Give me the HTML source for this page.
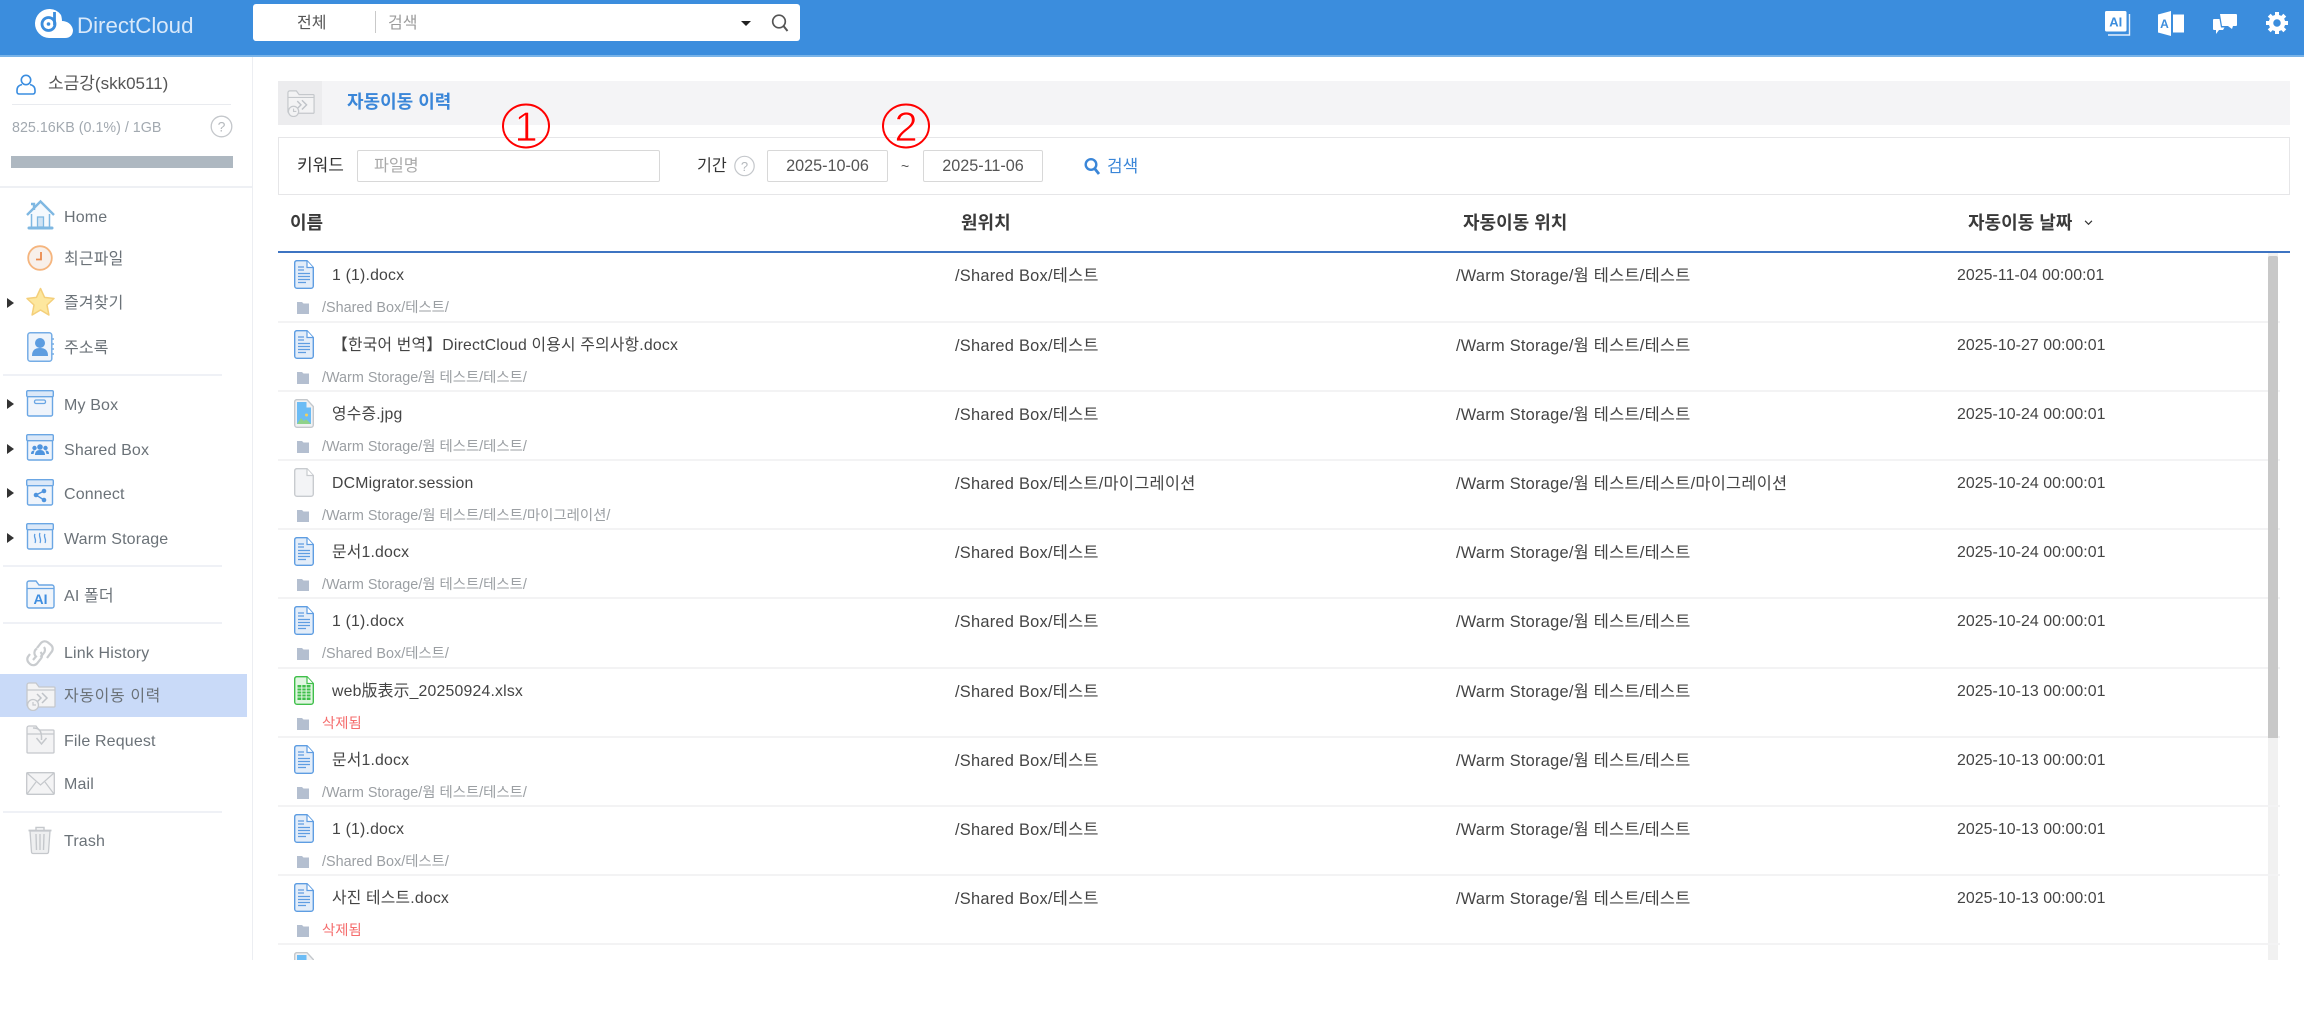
<!DOCTYPE html>
<html lang="ko">
<head>
<meta charset="utf-8">
<title>DirectCloud</title>
<style>
*{box-sizing:border-box}
html,body{margin:0;padding:0;background:#fff;width:2304px;height:1019px;overflow:hidden}
body{font-family:"Liberation Sans","Noto Sans CJK KR",sans-serif;position:relative;color:#444}
.a{position:absolute;white-space:nowrap}
.t{position:absolute;white-space:nowrap;line-height:24px;height:24px}
svg{position:absolute;display:block;overflow:visible}
.nav{font-size:16px;color:#6b7278;left:64px;letter-spacing:.15px;margin-top:1.5px}
.div{position:absolute;left:3px;width:219px;height:2px;background:#eff1f6}
.tri{position:absolute;left:7px;width:0;height:0;border-left:7px solid #333;border-top:5px solid transparent;border-bottom:5px solid transparent}
.th{font-size:18px;font-weight:bold;color:#3a3a3a;top:210px}
.input{position:absolute;top:150px;height:32px;background:#fff;border:1px solid #d8d8d8;border-radius:2px;font-size:16.2px;color:#555;text-align:center;line-height:30px}
.row{position:absolute;left:278px;width:2002px;height:69.2px;border-bottom:2px solid #f3f3f4}
.row .n{position:absolute;left:54px;top:11px;font-size:15.8px;letter-spacing:.2px;line-height:24px;color:#444;white-space:nowrap}
.row .s,.row .d{position:absolute;left:44px;top:45px;font-size:14.4px;line-height:20px;color:#9b9fa3;white-space:nowrap}
.row .d{color:#f56e6e}
.row .c2,.row .c3,.row .c4{position:absolute;top:11px;font-size:16.4px;letter-spacing:.25px;line-height:24px;color:#444;white-space:nowrap}
.row .c2{left:677px}
.row .c3{left:1178px}
.row .c4{left:1679px;font-size:15.9px;letter-spacing:.05px}
.row svg.ic{left:16px;top:7px}
.row svg.fo{left:19px;top:49px}
</style>
</head>
<body>
<svg width="0" height="0" style="position:absolute">
<defs>
<symbol id="doc" viewBox="0 0 20 29">
<path d="M2.500.7H13L19.300 7.500V26a2.300 2.300 0 0 1-2.300 2.300H3A2.300 2.300 0 0 1 .7 26V3A2.300 2.300 0 0 1 2.500.7Z" fill="#e3edf9" stroke="#5e9de2" stroke-width="1.400"/>
<path d="M13 1V7.500H19" fill="#fff" stroke="#5e9de2" stroke-width="1.200"/>
<path d="M4 7h6M4 10h6M4 13.500h12M4 16.500h12M4 19.500h12M4 22.500h8" stroke="#5e9de2" stroke-width="1.300"/>
</symbol>
<symbol id="xls" viewBox="0 0 20 29">
<path d="M2.500.7H13L19.300 7.500V26a2.300 2.300 0 0 1-2.300 2.300H3A2.300 2.300 0 0 1 .7 26V3A2.300 2.300 0 0 1 2.500.7Z" fill="#e2f6e2" stroke="#3fbf4a" stroke-width="1.400"/>
<path d="M13 1V7.500H19" fill="#fff" stroke="#3fbf4a" stroke-width="1.200"/>
<path d="M3.500 9h13v15h-13Z" fill="#3fbf4a"/>
<path d="M3.500 12h13M3.500 15h13M3.500 18h13M3.500 21h13M7.800 9v15M12.200 9v15" stroke="#e2f6e2" stroke-width="1"/>
</symbol>
<symbol id="img" viewBox="0 0 20 29">
<path d="M2.500.7H13L19.300 7.500V26a2.300 2.300 0 0 1-2.300 2.300H3A2.300 2.300 0 0 1 .7 26V3A2.300 2.300 0 0 1 2.500.7Z" fill="#f0f1f3" stroke="#c4c8cc" stroke-width="1.400"/>
<path d="M3 3h9.500v5.500H17V25H3Z" fill="#6cbcf5"/>
<path d="M3 25l4-6 3 3 2-2 5 5Z" fill="#8fd28a"/>
<circle cx="12.500" cy="16" r="1.500" fill="#f5cf5c"/>
</symbol>
<symbol id="blank" viewBox="0 0 20 29">
<path d="M2.500.7H13L19.300 7.500V26a2.300 2.300 0 0 1-2.300 2.300H3A2.300 2.300 0 0 1 .7 26V3A2.300 2.300 0 0 1 2.500.7Z" fill="#f3f4f6" stroke="#c8cbcf" stroke-width="1.400"/>
<path d="M13 1V7.500H19" fill="#fff" stroke="#c8cbcf" stroke-width="1.200"/>
</symbol>
<symbol id="fold" viewBox="0 0 12 12">
<path d="M0 0H5L6.500 1.500H12V12H0Z" fill="#b4bfd0"/>
</symbol>
<symbol id="box" viewBox="0 0 28 27">
<path d="M1.500 6H26.500V24.500a1.500 1.500 0 0 1-1.500 1.500H3a1.500 1.500 0 0 1-1.500-1.500Z" fill="#eff4fb" stroke="#6aa6e4" stroke-width="1.400"/>
<rect x=".7" y=".7" width="26.600" height="6" rx="1.200" fill="#dbe8f8" stroke="#6aa6e4" stroke-width="1.400"/>
</symbol>
<symbol id="movefold" viewBox="0 0 30 30">
<path d="M1 4a2 2 0 0 1 2-2H10L13 6H28a1 1 0 0 1 1 1V25a1 1 0 0 1-1 1H3a2 2 0 0 1-2-2Z" fill="#f3f3f4" stroke="#c5c8cc" stroke-width="1.300"/>
<path d="M1 9H29" stroke="#c5c8cc" stroke-width="1.200"/>
<path d="M11 13l4 4-4 4M16 12l5 5-5 5" fill="none" stroke="#bfc3c8" stroke-width="1.500"/>
<circle cx="7" cy="24" r="5.500" fill="#f3f3f4" stroke="#c5c8cc" stroke-width="1.300"/>
<path d="M7 21v3h3" fill="none" stroke="#c5c8cc" stroke-width="1.200"/>
</symbol>
</defs>
</svg>

<!-- HEADER -->
<div class="a" style="left:0;top:0;width:2304px;height:55px;background:#3b8ddd"></div>
<div class="a" style="left:0;top:55px;width:2304px;height:2px;background:#78b3e8"></div>
<svg style="left:35px;top:9px" width="38" height="29" viewBox="0 0 38 29">
<path d="M15 0a14 14 0 0 1 11 6c1 3 1 6 1 6 5 0 10 3 11 9 0 5-3 8-8 8H14A14 14 0 0 1 15 0Z" fill="#fff"/>
<circle cx="13.500" cy="15" r="6.500" fill="none" stroke="#3b8ddd" stroke-width="2.800"/>
<circle cx="13.500" cy="15" r="1.800" fill="#3b8ddd"/>
<path d="M19.500 3V16" stroke="#3b8ddd" stroke-width="2.800"/>
</svg>
<div class="t" style="left:77px;top:14px;font-size:22.300px;color:#d9e9fa">DirectCloud</div>
<div class="a" style="left:253px;top:4px;width:547px;height:37px;background:#fff;border-radius:3px"></div>
<div class="t" style="left:297px;top:12px;font-size:16px;color:#555">전체</div>
<div class="a" style="left:375px;top:11px;width:1px;height:22px;background:#c9c9c9"></div>
<div class="t" style="left:388px;top:12px;font-size:16px;color:#9b9b9b">검색</div>
<div class="a" style="left:741px;top:21px;width:0;height:0;border-top:5px solid #222;border-left:5px solid transparent;border-right:5px solid transparent"></div>
<svg style="left:771px;top:13px" width="18" height="20" viewBox="0 0 18 20"><circle cx="8" cy="8.500" r="6.300" fill="none" stroke="#555" stroke-width="1.700"/><path d="M12.500 13l4 5" stroke="#555" stroke-width="2"/></svg>

<svg style="left:2105px;top:11px" width="26" height="25" viewBox="0 0 26 25"><rect x="0" y="0" width="21.500" height="20.500" rx="1.500" fill="#fff"/><path d="M24.500 3V24H3" fill="none" stroke="#e6f0fb" stroke-width="1.400"/><text x="10.700" y="15.500" text-anchor="middle" font-family="Liberation Sans" font-weight="bold" font-size="13" fill="#3b8ddd">AI</text></svg>
<svg style="left:2158px;top:11px" width="26" height="25" viewBox="0 0 26 25"><path d="M0 3.500L13 0V25L0 21.500Z" fill="#fff"/><rect x="15" y="3.500" width="11" height="18" fill="#fff"/><text x="6.500" y="17" text-anchor="middle" font-family="Liberation Sans" font-weight="bold" font-size="12" fill="#3b8ddd">A</text></svg>
<svg style="left:2213px;top:14px" width="24" height="20" viewBox="0 0 24 20"><path d="M7 0H23a1 1 0 0 1 1 1V11a1 1 0 0 1-1 1H20L19 15L15 12H9Z" fill="#fff"/><path d="M1 5H6.500L8 13.500H11.500L10 16H6L3 20V16H1a1 1 0 0 1-1-1V6a1 1 0 0 1 1-1Z" fill="#fff"/></svg>
<svg style="left:2266px;top:12px" width="22" height="22" viewBox="0 0 22 22"><circle cx="11" cy="11" r="6" fill="none" stroke="#fff" stroke-width="4.500"/><path d="M11 0v4M11 18v4M0 11h4M18 11h4M3.200 3.200l2.800 2.800M16 16l2.800 2.800M3.200 18.800L6 16M16 6l2.800-2.800" stroke="#fff" stroke-width="4"/></svg>

<!-- SIDEBAR -->
<div class="a" style="left:252px;top:57px;width:1px;height:903px;background:#eceef2"></div>
<svg style="left:16px;top:74px" width="20" height="21" viewBox="0 0 20 21"><circle cx="10" cy="6" r="4.700" fill="none" stroke="#3a8de0" stroke-width="1.600"/><path d="M6 10.500C2.500 11.500 1 13 1 16.500V18a2 2 0 0 0 2 2H17a2 2 0 0 0 2-2V16.500C19 13 17.500 11.500 14 10.500" fill="none" stroke="#3a8de0" stroke-width="1.600"/></svg>
<div class="t" style="left:48px;top:72px;font-size:17px;color:#555">소금강(skk0511)</div>
<div class="a" style="left:12px;top:104px;width:219px;height:1px;background:#e9ebef"></div>
<div class="t" style="left:12px;top:116px;font-size:14.300px;color:#a2a9b0">825.16KB (0.1%) / 1GB</div>
<svg style="left:210px;top:115px" width="23" height="23" viewBox="0 0 23 23"><circle cx="11.500" cy="11.500" r="10.300" fill="#fff" stroke="#c4c7cb" stroke-width="1.300"/><text x="11.500" y="16.500" text-anchor="middle" font-family="Liberation Sans" font-size="14" fill="#b5b9bd">?</text></svg>
<div class="a" style="left:11px;top:156px;width:222px;height:12px;background:#aeb8c1"></div>
<div class="a" style="left:0;top:186px;width:252px;height:2px;background:#eef0f4"></div>

<svg style="left:26px;top:200px" width="29" height="30" viewBox="0 0 29 30"><path d="M5 28V13L14.500 3.500 24 13V28Z" fill="#f5f9fd"/><path d="M1 15L14.500 1.500 28 15" fill="none" stroke="#7fb8e2" stroke-width="2.400"/><path d="M5 4h3v6" fill="none" stroke="#7fb8e2" stroke-width="2.400"/><path d="M5.500 14V27M23.500 14V27" stroke="#7fb8e2" stroke-width="1.500"/><rect x="11.500" y="17" width="6" height="10" fill="#cfe3f4" stroke="#7fb8e2" stroke-width="1.300"/><rect x="1.500" y="26.500" width="26" height="3" rx="1.500" fill="#7fb8e2"/></svg>
<div class="t nav" style="top:204px">Home</div>
<svg style="left:27px;top:245px" width="26" height="26" viewBox="0 0 26 26"><circle cx="13" cy="13" r="11.800" fill="#f8f0ea" stroke="#f5b57e" stroke-width="1.800"/><path d="M14 7V14.500H9" fill="none" stroke="#ea8a4d" stroke-width="1.800"/></svg>
<div class="t nav" style="top:246px">최근파일</div>
<div class="tri" style="top:298px"></div>
<svg style="left:26px;top:287px" width="29" height="30" viewBox="0 0 29 30"><path d="M14.500 1.500L18.600 10.400 28 11.500 21 18 22.900 28 14.500 23 6.100 28 8 18 1 11.500 10.400 10.400Z" fill="#fde79e" stroke="#f4cf7a" stroke-width="1.500" stroke-linejoin="round"/></svg>
<div class="t nav" style="top:290px">즐겨찾기</div>
<svg style="left:27px;top:332px" width="27" height="30" viewBox="0 0 27 30"><rect x=".8" y=".8" width="24" height="28.400" rx="2.500" fill="#eef4fb" stroke="#75ade6" stroke-width="1.500"/><circle cx="13" cy="11" r="5" fill="#5d9de0"/><path d="M5 24c0-6 3-8 8-8s8 2 8 8Z" fill="#5d9de0"/><path d="M25 7h2M25 12h2M25 17h2M25 22h2" stroke="#75ade6" stroke-width="1.500"/></svg>
<div class="t nav" style="top:335px">주소록</div>
<div class="div" style="top:374px"></div>

<div class="tri" style="top:399px"></div>
<svg style="left:26px;top:390px" width="28" height="27"><use href="#box"/><rect x="8.500" y="10" width="11" height="3.500" rx="1.500" fill="none" stroke="#6aa6e4" stroke-width="1.300"/></svg>
<div class="t nav" style="top:392px">My Box</div>
<div class="tri" style="top:444px"></div>
<svg style="left:26px;top:434px" width="28" height="27"><use href="#box"/><circle cx="14" cy="13" r="2.800" fill="#4f94de"/><circle cx="8.500" cy="14" r="2.200" fill="#4f94de"/><circle cx="19.500" cy="14" r="2.200" fill="#4f94de"/><path d="M9 21c0-3.500 2-5 5-5s5 1.500 5 5ZM5 20c0-2.500 1-3.500 3.500-3.500L7.500 20ZM23 20c0-2.500-1-3.500-3.500-3.500l1 3.500Z" fill="#4f94de"/></svg>
<div class="t nav" style="top:437px">Shared Box</div>
<div class="tri" style="top:488px"></div>
<svg style="left:26px;top:479px" width="28" height="27"><use href="#box"/><path d="M18 12l-8 4 8 5" fill="none" stroke="#4f94de" stroke-width="1.400"/><circle cx="18" cy="12" r="2.300" fill="#4f94de"/><circle cx="10" cy="16" r="2.300" fill="#4f94de"/><circle cx="18" cy="21" r="2.300" fill="#4f94de"/></svg>
<div class="t nav" style="top:481px">Connect</div>
<div class="tri" style="top:533px"></div>
<svg style="left:26px;top:523px" width="28" height="27"><use href="#box"/><path d="M9 11c-2 3 2 5 0 9M14 10c-2 3 2 6 0 10M19 11c-2 3 2 5 0 9" fill="none" stroke="#5b9de3" stroke-width="1.300"/></svg>
<div class="t nav" style="top:526px">Warm Storage</div>
<div class="div" style="top:565px"></div>

<svg style="left:26px;top:580px" width="29" height="29" viewBox="0 0 29 29"><path d="M1 3a2 2 0 0 1 2-2H10L13 5H26a2 2 0 0 1 2 2V26a2 2 0 0 1-2 2H3a2 2 0 0 1-2-2Z" fill="#f0f5fb" stroke="#6aa6e4" stroke-width="1.400"/><path d="M1 8.500H28" stroke="#6aa6e4" stroke-width="1.300"/><text x="14.500" y="24" text-anchor="middle" font-family="Liberation Sans" font-weight="bold" font-size="14" fill="#3f8ee0">AI</text></svg>
<div class="t nav" style="top:583px">AI 폴더</div>
<div class="div" style="top:622px"></div>

<svg style="left:26px;top:637px" width="29" height="30" viewBox="0 0 29 30"><g fill="none" stroke="#c9cccf" stroke-width="2.200"><path d="M4 17l-1.500 2a5 5 0 0 0 .5 7l1 1a5 5 0 0 0 7-.5l4-5a5 5 0 0 0-.5-6.500"/><path d="M11 11l4-5a5 5 0 0 1 7-.5l3 2.500a5 5 0 0 1 .5 7L21 21"/><path d="M18 10a5 5 0 0 1-.5 6.500l-3 3.500"/><path d="M7 23l3-3.500a5 5 0 0 1 1-8"/></g></svg>
<div class="t nav" style="top:640px">Link History</div>

<div class="a" style="left:0;top:674px;width:247px;height:43px;background:#c9daf8"></div>
<svg style="left:26px;top:681px" width="30" height="30"><use href="#movefold"/></svg>
<div class="t nav" style="top:683px;letter-spacing:.6px">자동이동 이력</div>
<svg style="left:26px;top:725px" width="29" height="29" viewBox="0 0 29 29"><path d="M1 3a2 2 0 0 1 2-2H10L13 5H27a1 1 0 0 1 1 1V27a1 1 0 0 1-1 1H2a1 1 0 0 1-1-1Z" fill="#f3f3f4" stroke="#c5c8cc" stroke-width="1.300"/><path d="M1 9H28" stroke="#c5c8cc" stroke-width="1.200"/><path d="M7 3c6 0 9 2 8.500 12M10.500 13l5 6 5-6" fill="none" stroke="#c5c8cc" stroke-width="1.500"/></svg>
<div class="t nav" style="top:728px">File Request</div>
<svg style="left:26px;top:772px" width="29" height="23" viewBox="0 0 29 23"><rect x=".7" y=".7" width="27.600" height="21.600" rx="1" fill="#f4f4f5" stroke="#c5c8cc" stroke-width="1.300"/><path d="M1 1l13.500 12L28 1M1 22l9-12M28 22l-9-12" fill="none" stroke="#c5c8cc" stroke-width="1.200"/></svg>
<div class="t nav" style="top:771px">Mail</div>
<div class="div" style="top:811px"></div>
<svg style="left:28px;top:826px" width="24" height="28" viewBox="0 0 24 28"><path d="M2 5H22L20.500 26a1.500 1.500 0 0 1-1.500 1.500H5A1.500 1.500 0 0 1 3.500 26Z" fill="#eeeff0" stroke="#c5c8cc" stroke-width="1.300"/><path d="M.5 4.500H23.500" stroke="#c5c8cc" stroke-width="1.800"/><path d="M8 4V1.500H16V4" fill="none" stroke="#c5c8cc" stroke-width="1.400"/><path d="M8 8L8.500 24M12 8V24M16 8L15.500 24" stroke="#c5c8cc" stroke-width="1.400"/></svg>
<div class="t nav" style="top:828px">Trash</div>

<!-- CONTENT HEADER -->
<div class="a" style="left:278px;top:81px;width:2012px;height:44px;background:#f4f4f6"></div>
<div class="a" style="left:278px;top:81px;width:44px;height:44px;background:#ececee"></div>
<svg style="left:287px;top:89px" width="28" height="28"><use href="#movefold"/></svg>
<div class="t" style="left:347px;top:90px;font-size:18px;font-weight:bold;color:#3a86d8">자동이동 이력</div>

<!-- SEARCH PANEL -->
<div class="a" style="left:278px;top:137px;width:2012px;height:58px;border:1px solid #e6e6e8;background:#fff"></div>
<div class="t" style="left:297px;top:154px;font-size:17px;color:#333">키워드</div>
<div class="input" style="left:357px;width:303px;text-align:left;padding-left:16px;color:#a9a9a9">파일명</div>
<div class="t" style="left:697px;top:154px;font-size:16.200px;color:#333">기간</div>
<svg style="left:734px;top:155px" width="21" height="22" viewBox="0 0 21 22"><circle cx="10.500" cy="11" r="9.700" fill="#fff" stroke="#c4c7cb" stroke-width="1.200"/><text x="10.500" y="16" text-anchor="middle" font-family="Liberation Sans" font-size="13" fill="#b5b9bd">?</text></svg>
<div class="input" style="left:767px;width:121px">2025-10-06</div>
<div class="t" style="left:901px;top:154px;font-size:14px;color:#555">~</div>
<div class="input" style="left:923px;width:120px">2025-11-06</div>
<svg style="left:1084px;top:157px" width="17" height="18" viewBox="0 0 17 18"><circle cx="7" cy="7.500" r="5.300" fill="none" stroke="#3a86d8" stroke-width="2.400"/><path d="M11 12l4 5" stroke="#3a86d8" stroke-width="2.800"/></svg>
<div class="t" style="left:1107px;top:155px;font-size:17px;color:#3a86d8">검색</div>

<!-- ANNOTATIONS -->
<svg style="left:500px;top:102px" width="52" height="48" viewBox="0 0 52 48"><ellipse cx="26" cy="24" rx="23" ry="21.500" fill="none" stroke="#f00" stroke-width="2"/><text x="26" y="39" text-anchor="middle" font-family="Liberation Sans" font-size="42" fill="#f00" stroke="#fff" stroke-width=".8" paint-order="fill">1</text></svg>
<svg style="left:880px;top:102px" width="52" height="48" viewBox="0 0 52 48"><ellipse cx="26" cy="24" rx="23" ry="21.500" fill="none" stroke="#f00" stroke-width="2"/><text x="26" y="39" text-anchor="middle" font-family="Liberation Sans" font-size="42" fill="#f00" stroke="#fff" stroke-width=".8" paint-order="fill">2</text></svg>

<!-- TABLE HEADER -->
<div class="t th" style="left:290px;top:211px">이름</div>
<div class="t th" style="left:961px;top:211px">원위치</div>
<div class="t th" style="left:1463px;top:211px">자동이동 위치</div>
<div class="t th" style="left:1968px;top:211px">자동이동 날짜</div>
<svg style="left:2084px;top:220px" width="9" height="6" viewBox="0 0 10 7"><path d="M1 1l4 4 4-4" fill="none" stroke="#333" stroke-width="1.400"/></svg>
<div class="a" style="left:278px;top:251px;width:2012px;height:2px;background:#3e74c2"></div>

<!-- ROWS -->
<div class="a" style="left:0;top:253px;width:2304px;height:707px;overflow:hidden">
<div class="a" style="left:2268px;top:0;width:10px;height:707px;background:#f1f1f1"></div>

<div class="row" style="top:.4px"><svg class="ic" width="20" height="29"><use href="#doc"/></svg><span class="n">1 (1).docx</span><svg class="fo" width="12" height="12"><use href="#fold"/></svg><span class="s">/Shared Box/테스트/</span><span class="c2">/Shared Box/테스트</span><span class="c3">/Warm Storage/웜 테스트/테스트</span><span class="c4">2025-11-04 00:00:01</span></div>
<div class="row" style="top:69.6px"><svg class="ic" width="20" height="29"><use href="#doc"/></svg><span class="n">【한국어 번역】DirectCloud 이용시 주의사항.docx</span><svg class="fo" width="12" height="12"><use href="#fold"/></svg><span class="s">/Warm Storage/웜 테스트/테스트/</span><span class="c2">/Shared Box/테스트</span><span class="c3">/Warm Storage/웜 테스트/테스트</span><span class="c4">2025-10-27 00:00:01</span></div>
<div class="row" style="top:138.8px"><svg class="ic" width="20" height="29"><use href="#img"/></svg><span class="n">영수증.jpg</span><svg class="fo" width="12" height="12"><use href="#fold"/></svg><span class="s">/Warm Storage/웜 테스트/테스트/</span><span class="c2">/Shared Box/테스트</span><span class="c3">/Warm Storage/웜 테스트/테스트</span><span class="c4">2025-10-24 00:00:01</span></div>
<div class="row" style="top:208px"><svg class="ic" width="20" height="29"><use href="#blank"/></svg><span class="n">DCMigrator.session</span><svg class="fo" width="12" height="12"><use href="#fold"/></svg><span class="s">/Warm Storage/웜 테스트/테스트/마이그레이션/</span><span class="c2">/Shared Box/테스트/마이그레이션</span><span class="c3">/Warm Storage/웜 테스트/테스트/마이그레이션</span><span class="c4">2025-10-24 00:00:01</span></div>
<div class="row" style="top:277.2px"><svg class="ic" width="20" height="29"><use href="#doc"/></svg><span class="n">문서1.docx</span><svg class="fo" width="12" height="12"><use href="#fold"/></svg><span class="s">/Warm Storage/웜 테스트/테스트/</span><span class="c2">/Shared Box/테스트</span><span class="c3">/Warm Storage/웜 테스트/테스트</span><span class="c4">2025-10-24 00:00:01</span></div>
<div class="row" style="top:346.4px"><svg class="ic" width="20" height="29"><use href="#doc"/></svg><span class="n">1 (1).docx</span><svg class="fo" width="12" height="12"><use href="#fold"/></svg><span class="s">/Shared Box/테스트/</span><span class="c2">/Shared Box/테스트</span><span class="c3">/Warm Storage/웜 테스트/테스트</span><span class="c4">2025-10-24 00:00:01</span></div>
<div class="row" style="top:415.6px"><svg class="ic" width="20" height="29"><use href="#xls"/></svg><span class="n">web版表示_20250924.xlsx</span><svg class="fo" width="12" height="12"><use href="#fold"/></svg><span class="d">삭제됨</span><span class="c2">/Shared Box/테스트</span><span class="c3">/Warm Storage/웜 테스트/테스트</span><span class="c4">2025-10-13 00:00:01</span></div>
<div class="row" style="top:484.8px"><svg class="ic" width="20" height="29"><use href="#doc"/></svg><span class="n">문서1.docx</span><svg class="fo" width="12" height="12"><use href="#fold"/></svg><span class="s">/Warm Storage/웜 테스트/테스트/</span><span class="c2">/Shared Box/테스트</span><span class="c3">/Warm Storage/웜 테스트/테스트</span><span class="c4">2025-10-13 00:00:01</span></div>
<div class="row" style="top:554px"><svg class="ic" width="20" height="29"><use href="#doc"/></svg><span class="n">1 (1).docx</span><svg class="fo" width="12" height="12"><use href="#fold"/></svg><span class="s">/Shared Box/테스트/</span><span class="c2">/Shared Box/테스트</span><span class="c3">/Warm Storage/웜 테스트/테스트</span><span class="c4">2025-10-13 00:00:01</span></div>
<div class="row" style="top:623.2px"><svg class="ic" width="20" height="29"><use href="#doc"/></svg><span class="n">사진 테스트.docx</span><svg class="fo" width="12" height="12"><use href="#fold"/></svg><span class="d">삭제됨</span><span class="c2">/Shared Box/테스트</span><span class="c3">/Warm Storage/웜 테스트/테스트</span><span class="c4">2025-10-13 00:00:01</span></div>
<svg style="left:294px;top:699.400px" width="20" height="29"><use href="#img"/></svg>

<div class="a" style="left:2268px;top:3px;width:10px;height:482px;background:#c8c8c8;border-radius:2px 2px 0 0"></div>
</div>
</body>
</html>
